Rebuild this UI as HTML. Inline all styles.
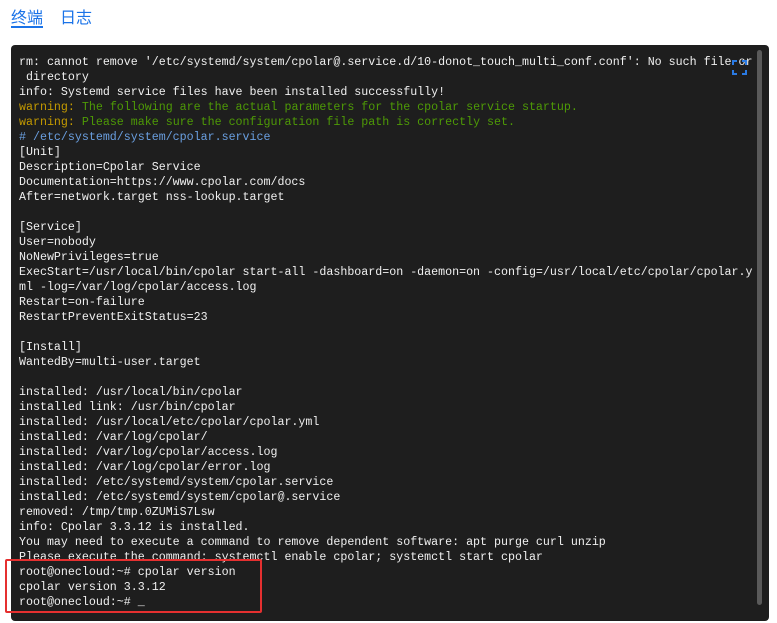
<!DOCTYPE html>
<html><head><meta charset="utf-8"><style>
body{margin:0;width:777px;height:623px;background:#fff;position:relative;overflow:hidden;font-family:"Liberation Sans","Noto Sans CJK SC",sans-serif}
.tab{position:absolute;top:4px;font-size:16px;color:#1a73e8}
.ul{position:absolute;left:11px;top:26px;width:32px;height:2px;background:#1a73e8}
.term{position:absolute;left:11px;top:45px;width:758px;height:576px;background:#1e1e1e;border-radius:4px}
pre{position:absolute;left:19px;top:55px;margin:0;font-family:"Liberation Mono",monospace;font-size:11.65px;line-height:15px;color:#f0f0f0;white-space:pre}
.y{color:#c49a00}.g{color:#4e9a06}.b{color:#6a9fe0}
.sb{position:absolute;left:757px;top:50px;width:5px;height:555px;background:#5a5a5a;border-radius:3px}
.red{position:absolute;left:5px;top:559px;width:253px;height:50px;border:2px solid #e53030;border-radius:2px}
</style></head><body>
<div class="tab" style="left:11px">终端</div><div class="ul"></div>
<div class="tab" style="left:60px">日志</div>
<div class="term"></div>
<div class="sb"></div>
<pre>rm: cannot remove '/etc/systemd/system/cpolar@.service.d/10-donot_touch_multi_conf.conf': No such file or
 directory
info: Systemd service files have been installed successfully!
<span class="y">warning:</span><span class="g"> The following are the actual parameters for the cpolar service startup.</span>
<span class="y">warning:</span><span class="g"> Please make sure the configuration file path is correctly set.</span>
<span class="b"># /etc/systemd/system/cpolar.service</span>
[Unit]
Description=Cpolar Service
Documentation=https://www.cpolar.com/docs
After=network.target nss-lookup.target

[Service]
User=nobody
NoNewPrivileges=true
ExecStart=/usr/local/bin/cpolar start-all -dashboard=on -daemon=on -config=/usr/local/etc/cpolar/cpolar.y
ml -log=/var/log/cpolar/access.log
Restart=on-failure
RestartPreventExitStatus=23

[Install]
WantedBy=multi-user.target

installed: /usr/local/bin/cpolar
installed link: /usr/bin/cpolar
installed: /usr/local/etc/cpolar/cpolar.yml
installed: /var/log/cpolar/
installed: /var/log/cpolar/access.log
installed: /var/log/cpolar/error.log
installed: /etc/systemd/system/cpolar.service
installed: /etc/systemd/system/cpolar@.service
removed: /tmp/tmp.0ZUMiS7Lsw
info: Cpolar 3.3.12 is installed.
You may need to execute a command to remove dependent software: apt purge curl unzip
Please execute the command: systemctl enable cpolar; systemctl start cpolar
root@onecloud:~# cpolar version
cpolar version 3.3.12
root@onecloud:~# _</pre>
<svg style="position:absolute;left:732px;top:60px" width="15" height="15" viewBox="0 0 15 15" fill="none" stroke="#2a7ae2" stroke-width="2"><path d="M1 5V1H5M10 1H14V5M14 10V14H10M5 14H1V10"/></svg>
<div class="red"></div>
</body></html>
